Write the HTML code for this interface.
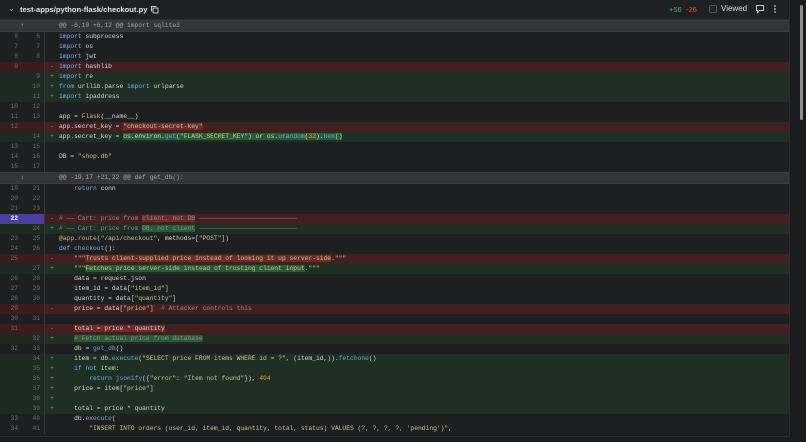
<!DOCTYPE html>
<html><head><meta charset="utf-8"><style>
*{margin:0;padding:0;box-sizing:border-box}
body{width:806px;height:442px;background:#1a1b1e;overflow:hidden;font-family:"Liberation Sans",sans-serif;position:relative}
#panel{position:absolute;left:0;top:0;width:790px;height:437px;background:#1e1f21;border-right:1px solid #2c2d30;border-bottom:1px solid #2c2d30}
#hdr{height:20px;background:#1f2023;border-bottom:1px solid #2c2d30;position:relative;color:#e6e6e6}
.r{height:10px;display:flex;font-family:"Liberation Mono",monospace;font-size:6.3px;line-height:10px;color:#d4d6da;white-space:pre}
.n1,.n2{width:22px;text-align:right;padding-right:4px;color:#6b6e73}
.n2{width:23px;border-right:1px solid #34363a;margin-right:0}
.m{width:14px;text-align:center;color:#8b8e93}
.c{flex:1}
.h{height:12px;background:#333538;border-top:1px solid #3a3c40;border-bottom:1px solid #3a3c40;line-height:10px}
.h .n1{width:45px;text-align:center;padding:0;color:#9a9da2}
.h .c{padding-left:14px;color:#a8abb0}
.d{background:#43201f}.d .n1,.d .n2{background:#3a1c1c}
.a{background:#1f2f23}.a .n1,.a .n2{background:#1c2a20}
.k{color:#6cb6ff}.s{color:#c5c98d}.f{color:#e2b56c}.b{color:#6ca6e0}.o{color:#f69d50}.g{color:#8b8e93}
.hd{background:#6e2a28}.ha{background:#2a5a34}
.sel .n1{background:#4c3fa0;color:#fff;font-weight:bold}.sel .n2{background:#4c3fa0}
</style></head><body>
<div id="panel">
<div id="hdr">
<span style="position:absolute;left:8px;top:4px;font-size:8px;color:#aaa">⌄</span>
<span style="position:absolute;left:20px;top:5px;font-size:7.6px;font-weight:bold">test-apps/python-flask/checkout.py</span>
<svg style="position:absolute;left:150px;top:5px" width="9" height="9" viewBox="0 0 9 9" fill="none" stroke="#ccc" stroke-width="1"><rect x="3" y="3" width="5" height="5" rx="1"/><path d="M2 6H1.5V1.5H6V2"/></svg>
<span style="position:absolute;left:669px;top:5px;font-size:7.5px;color:#3fb950">+56</span>
<span style="position:absolute;left:686px;top:5px;font-size:7.5px;color:#f85149">-26</span>
<span style="position:absolute;left:709px;top:5px;width:8px;height:8px;border:1px solid #555;border-radius:2px;background:#222"></span>
<span style="position:absolute;left:721px;top:4px;font-size:8px;color:#ddd">Viewed</span>
<svg style="position:absolute;left:755px;top:4px" width="10" height="10" viewBox="0 0 10 10" fill="none" stroke="#ccc" stroke-width="1"><path d="M1.5 1.5h7v5h-4l-2 2v-2h-1z"/></svg>
<svg style="position:absolute;left:773px;top:4px" width="4" height="10"><circle cx="2" cy="2" r="0.9" fill="#ccc"/><circle cx="2" cy="5" r="0.9" fill="#ccc"/><circle cx="2" cy="8" r="0.9" fill="#ccc"/></svg>
</div>
<div class="r h"><span class="n1">⇡</span><span class="c">@@ -6,10 +6,12 @@ import sqlite3</span></div>
<div class="r"><span class="n1">6</span><span class="n2">6</span><span class="m"> </span><span class="c"><span class="k">import</span> subprocess</span></div>
<div class="r"><span class="n1">7</span><span class="n2">7</span><span class="m"> </span><span class="c"><span class="k">import</span> os</span></div>
<div class="r"><span class="n1">8</span><span class="n2">8</span><span class="m"> </span><span class="c"><span class="k">import</span> jwt</span></div>
<div class="r d"><span class="n1">9</span><span class="n2"></span><span class="m">-</span><span class="c"><span class="k">import</span> hashlib</span></div>
<div class="r a"><span class="n1"></span><span class="n2">9</span><span class="m">+</span><span class="c"><span class="k">import</span> re</span></div>
<div class="r a"><span class="n1"></span><span class="n2">10</span><span class="m">+</span><span class="c"><span class="k">from</span> urllib.parse <span class="k">import</span> urlparse</span></div>
<div class="r a"><span class="n1"></span><span class="n2">11</span><span class="m">+</span><span class="c"><span class="k">import</span> ipaddress</span></div>
<div class="r"><span class="n1">10</span><span class="n2">12</span><span class="m"> </span><span class="c"></span></div>
<div class="r"><span class="n1">11</span><span class="n2">13</span><span class="m"> </span><span class="c">app = <span class="f">Flask</span>(__name__)</span></div>
<div class="r d"><span class="n1">12</span><span class="n2"></span><span class="m">-</span><span class="c">app.secret_key = <span class="s hd">"checkout-secret-key"</span></span></div>
<div class="r a"><span class="n1"></span><span class="n2">14</span><span class="m">+</span><span class="c">app.secret_key = <span class="ha">os.environ.<span class="b">get</span>(<span class="s">"FLASK_SECRET_KEY"</span>) or os.<span class="b">urandom</span>(<span class="o">32</span>).<span class="b">hex</span>()</span></span></div>
<div class="r"><span class="n1">13</span><span class="n2">15</span><span class="m"> </span><span class="c"></span></div>
<div class="r"><span class="n1">14</span><span class="n2">16</span><span class="m"> </span><span class="c">DB = <span class="s">"shop.db"</span></span></div>
<div class="r"><span class="n1">15</span><span class="n2">17</span><span class="m"> </span><span class="c"></span></div>
<div class="r h"><span class="n1">↕</span><span class="c">@@ -19,17 +21,22 @@ def get_db():</span></div>
<div class="r"><span class="n1">19</span><span class="n2">21</span><span class="m"> </span><span class="c">    <span class="k">return</span> conn</span></div>
<div class="r"><span class="n1">20</span><span class="n2">22</span><span class="m"> </span><span class="c"></span></div>
<div class="r"><span class="n1">21</span><span class="n2">23</span><span class="m"> </span><span class="c"></span></div>
<div class="r d sel"><span class="n1">22</span><span class="n2"></span><span class="m">-</span><span class="c"><span class="g"># ── Cart: price from <span class="hd">client, not DB</span> ──────────────────────────</span></span></div>
<div class="r a"><span class="n1"></span><span class="n2">24</span><span class="m">+</span><span class="c"><span class="g"># ── Cart: price from <span class="ha">DB, not client</span> ──────────────────────────</span></span></div>
<div class="r"><span class="n1">23</span><span class="n2">25</span><span class="m"> </span><span class="c"><span class="f">@app.route</span>(<span class="s">"/api/checkout"</span>, methods=[<span class="s">"POST"</span>])</span></div>
<div class="r"><span class="n1">24</span><span class="n2">26</span><span class="m"> </span><span class="c"><span class="k">def</span> <span class="b">checkout</span>():</span></div>
<div class="r d"><span class="n1">25</span><span class="n2"></span><span class="m">-</span><span class="c">    <span class="s">"""<span class="hd">Trusts client-supplied price instead of looking it up server-side</span>."""</span></span></div>
<div class="r a"><span class="n1"></span><span class="n2">27</span><span class="m">+</span><span class="c">    <span class="s">"""<span class="ha">Fetches price server-side instead of trusting client input</span>."""</span></span></div>
<div class="r"><span class="n1">26</span><span class="n2">28</span><span class="m"> </span><span class="c">    data = request.json</span></div>
<div class="r"><span class="n1">27</span><span class="n2">29</span><span class="m"> </span><span class="c">    item_id = data[<span class="s">"item_id"</span>]</span></div>
<div class="r"><span class="n1">28</span><span class="n2">30</span><span class="m"> </span><span class="c">    quantity = data[<span class="s">"quantity"</span>]</span></div>
<div class="r d"><span class="n1">29</span><span class="n2"></span><span class="m">-</span><span class="c">    price = data[<span class="s">"price"</span>]  <span class="g"># Attacker controls this</span></span></div>
<div class="r"><span class="n1">30</span><span class="n2">31</span><span class="m"> </span><span class="c"></span></div>
<div class="r d"><span class="n1">31</span><span class="n2"></span><span class="m">-</span><span class="c">    <span class="hd">total = price * quantity</span></span></div>
<div class="r a"><span class="n1"></span><span class="n2">32</span><span class="m">+</span><span class="c">    <span class="g ha"># Fetch actual price from database</span></span></div>
<div class="r"><span class="n1">32</span><span class="n2">33</span><span class="m"> </span><span class="c">    db = <span class="b">get_db</span>()</span></div>
<div class="r a"><span class="n1"></span><span class="n2">34</span><span class="m">+</span><span class="c">    item = db.<span class="b">execute</span>(<span class="s">"SELECT price FROM items WHERE id = ?"</span>, (item_id,)).<span class="b">fetchone</span>()</span></div>
<div class="r a"><span class="n1"></span><span class="n2">35</span><span class="m">+</span><span class="c">    <span class="k">if not</span> item:</span></div>
<div class="r a"><span class="n1"></span><span class="n2">36</span><span class="m">+</span><span class="c">        <span class="k">return</span> <span class="b">jsonify</span>({<span class="s">"error"</span>: <span class="s">"Item not found"</span>}), <span class="o">404</span></span></div>
<div class="r a"><span class="n1"></span><span class="n2">37</span><span class="m">+</span><span class="c">    price = item[<span class="s">"price"</span>]</span></div>
<div class="r a"><span class="n1"></span><span class="n2">38</span><span class="m">+</span><span class="c"></span></div>
<div class="r a"><span class="n1"></span><span class="n2">39</span><span class="m">+</span><span class="c">    total = price * quantity</span></div>
<div class="r"><span class="n1">33</span><span class="n2">40</span><span class="m"> </span><span class="c">    db.<span class="b">execute</span>(</span></div>
<div class="r"><span class="n1">34</span><span class="n2">41</span><span class="m"> </span><span class="c">        <span class="s">"INSERT INTO orders (user_id, item_id, quantity, total, status) VALUES (?, ?, ?, ?, 'pending')"</span>,</span></div>
</div>
<div style="position:absolute;left:800px;top:5px;width:3px;height:115px;background:#8a8c90;border-radius:2px"></div>
</body></html>
